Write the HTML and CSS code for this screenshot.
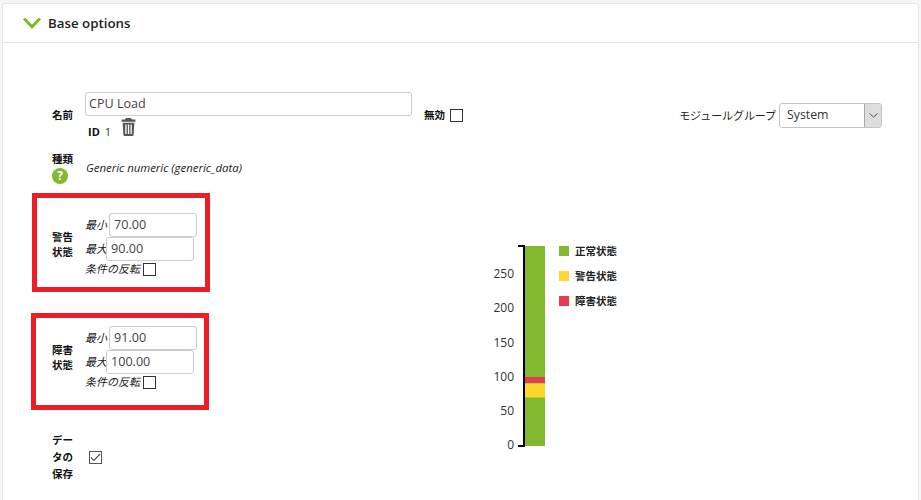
FILE: index.html
```html
<!DOCTYPE html>
<html lang="ja">
<head>
<meta charset="utf-8">
<title>Base options</title>
<link rel="stylesheet" href="styles.css">
</head>
<body>
<section class="card">
  <header class="card-head">
    <svg class="chev" width="18" height="12" viewBox="0 0 18 12"><path d="M1 1.500 9 9.800 17 1.500" fill="none" stroke="#82b92e" stroke-width="3"/></svg>
    <span class="card-title">Base options</span>
  </header>
  <div class="card-body">
    <div class="top-row">
      <div class="lab name-lab">名前</div>
      <div class="name-col">
        <input class="field name-field" value="CPU Load">
        <div class="id-row">
          <b class="id-b">ID</b><span class="id-v">1</span>
          <svg class="trash" width="15" height="18" viewBox="0 0 15 18"><path fill="#555" d="M5 0h5l1 1.6h3.4v2.2H.6V1.6H4zM1.6 4.8h11.8l-.8 12a1.2 1.2 0 0 1-1.2 1.2H3.600a1.200 1.200 0 0 1-1.200-1.200zM4.300 6.500v9.500h1.300V6.500zM6.900 6.500v9.500h1.300V6.500zM9.500 6.500v9.500h1.300V6.500z" fill-rule="evenodd"/></svg>
        </div>
      </div>
      <div class="lab dis-lab">無効</div>
      <span class="check dis-check"></span>
      <div class="group-wrap">
        <span class="group-lab">モジュールグループ</span>
        <div class="select"><span class="select-v">System</span><span class="select-btn"><svg width="9" height="5" viewBox="0 0 9 5"><path d="M.5.5l4 3.500 4-3.500" fill="none" stroke="#555" stroke-width="1"/></svg></span></div>
      </div>
    </div>
    <div class="type-row">
      <div class="lab type-lab">種類<span class="help">?</span></div>
      <em class="type-v">Generic numeric (generic_data)</em>
    </div>
    <div class="lower">
      <div class="left">
        <div class="thresh">
          <div class="lab state-lab">警告<br>状態</div>
          <div class="thresh-fields">
            <div class="mm"><i>最小</i><input class="field num num-min" value="70.00"></div>
            <div class="mm"><i>最大</i><input class="field num num-max" value="90.00"></div>
            <div class="inv"><i>条件の反転</i><span class="check"></span></div>
          </div>
        </div>
        <div class="thresh thresh-crit">
          <div class="lab state-lab">障害<br>状態</div>
          <div class="thresh-fields">
            <div class="mm"><i>最小</i><input class="field num num-min" value="91.00"></div>
            <div class="mm"><i>最大</i><input class="field num num-max" value="100.00"></div>
            <div class="inv"><i>条件の反転</i><span class="check"></span></div>
          </div>
        </div>
        <div class="store">
          <div class="lab store-lab">デー<br>タの<br>保存</div>
          <span class="check checked"><svg width="11" height="9" viewBox="0 0 11 9"><path d="M1 4.500 4 7.500 10 1" fill="none" stroke="#555" stroke-width="1.200"/></svg></span>
        </div>
      </div>
      <div class="chart">
        <svg class="axis" width="58" height="210" viewBox="0 0 58 210">
          <g class="tick-labels">
            <text x="27" y="33">250</text>
            <text x="27" y="67">200</text>
            <text x="27" y="102">150</text>
            <text x="27" y="136">100</text>
            <text x="27" y="170">50</text>
            <text x="27" y="204">0</text>
          </g>
          <path d="M31 1h6v200h-6" fill="none" stroke="#000" stroke-width="2"/>
          <rect x="38" y="1" width="20" height="200" fill="#82b92e"/>
          <rect x="38" y="132" width="20" height="6" fill="#e63c52"/>
          <rect x="38" y="138.500" width="20" height="14" fill="#fdd82f"/>
        </svg>
        <ul class="legend">
          <li><span class="sw sw-g"></span>正常状態</li>
          <li><span class="sw sw-y"></span>警告状態</li>
          <li><span class="sw sw-r"></span>障害状態</li>
        </ul>
      </div>
    </div>
  </div>
  <div class="mark mark-a"></div>
  <div class="mark mark-b"></div>
</section>
</body>
</html>
```
FILE: styles.css
```css
* { box-sizing: border-box; }
html, body { height: 100%; }
body {
  margin: 0;
  background: #f6f6f6;
  color: #333;
  font: 11px/14px "Open Sans", "Noto Sans CJK JP", sans-serif;
  overflow: hidden;
}
.card {
  position: relative;
  margin: 3px 2px 0 2px;
  height: 497px;
  border: 1px solid #e6e6e6;
  border-bottom: 0;
  border-radius: 3px 3px 0 0;
  background: #fff;
}
.card-head {
  display: flex;
  align-items: center;
  height: 39px;
  padding-left: 20px;
  border-bottom: 1px solid #e2e2e2;
}
.chev { margin-right: 7px; }
.card-title { font-size: 13.300px; font-weight: 600; color: #222; }
.card-body { padding: 49px 0 0 49px; }
.lab { font-weight: 700; color: #111; font-size: 10.500px; }
.top-row { display: flex; align-items: flex-start; }
.name-lab { width: 33px; margin-top: 16px; }
.name-col { width: 327px; }
.field {
  display: block;
  font: 12.600px "Open Sans", sans-serif;
  color: #444;
  background: #fff;
  border: 1px solid #ccc;
  border-radius: 3px;
  padding: 0 3px 2px;
  outline: 0;
}
.name-field { width: 100%; height: 24px; }
.id-row { display: flex; align-items: flex-start; padding-left: 3px; height: 30px; }
.id-b { font-weight: 700; color: #111; margin-top: 9px; font-size: 11px; }
.id-v { margin: 9px 0 0 5px; }
.trash { margin: 2px 0 0 10px; }
.dis-lab { margin: 16px 0 0 12px; width: 26px; }
.check {
  display: inline-flex;
  align-items: center;
  justify-content: center;
  width: 13px;
  height: 13px;
  border: 1px solid #333;
  background: #fff;
  flex: none;
}
.dis-check { margin-top: 17px; }
.group-wrap { display: flex; align-items: center; margin: 11px 0 0 auto; padding-right: 36px; }
.group-lab { font-size: 11px; color: #222; margin-right: 3px; letter-spacing: -.08px; }
.select {
  display: flex;
  width: 103px;
  height: 25px;
  border: 1px solid #c4c4c4;
  border-radius: 3px;
  font-size: 12.300px;
}
.select-v { flex: 1; padding: 4px 0 0 7px; }
.select-btn {
  display: flex; align-items: center; justify-content: center;
  width: 17px; background: #ddd; border-left: 1px solid #aaa;
  border-radius: 0 2px 2px 0;
}
.type-row { display: flex; align-items: flex-start; margin-top: 6px; }
.type-lab { width: 33px; display: flex; flex-direction: column; align-items: flex-start; }
.help {
  width: 16px; height: 16px; border-radius: 50%;
  background: #82b92e; color: #fff; text-align: center;
  font: 700 12px/16px "Open Sans", sans-serif; margin-top: 2px;
}
.type-v { font-size: 11.400px; color: #222; margin: 9px 0 0 1px; }
.lower { display: flex; }
.left { width: 435px; padding-top: 26px; }
.thresh { display: flex; align-items: center; height: 74px; }
.thresh-crit { margin-top: 39px; }
.state-lab { width: 33px; line-height: 15.500px; padding-bottom: 4px; }
.thresh-fields { display: flex; flex-direction: column; }
.thresh-fields i { font-size: 11px; color: #222; }
.mm { display: flex; align-items: center; height: 24px; }
.num { width: 88px; height: 24px; padding-left: 4px; }
.num-min { margin-left: 2px; }
.num-max { margin-left: -1px; }
.inv { display: flex; align-items: center; gap: 3px; height: 18px; margin: -1px 0 3px; }
.store { display: flex; align-items: center; margin-top: 35px; }
.store-lab { width: 37px; line-height: 17px; }
.checked { border-color: #555; }
.chart { display: flex; align-items: flex-start; margin-top: 54px; }
.axis { margin-top: 7px; }
.tick-labels text { font: 12px "Open Sans", sans-serif; fill: #333; text-anchor: end; }
.legend { list-style: none; margin: 0 0 0 14px; padding: 0; font-weight: 700; color: #222; font-size: 10.500px; }
.legend li { display: flex; align-items: center; height: 25px; }
.sw { width: 10px; height: 10px; margin-right: 6px; }
.sw-g { background: #82b92e; }
.sw-y { background: #fdd82f; }
.sw-r { background: #e63c52; }
.mark { position: absolute; border: 5px solid #ee1c25; }
.mark-a { left: 29px; top: 189px; width: 178px; height: 99px; }
.mark-b { left: 28px; top: 309px; width: 178px; height: 97px; }
```
